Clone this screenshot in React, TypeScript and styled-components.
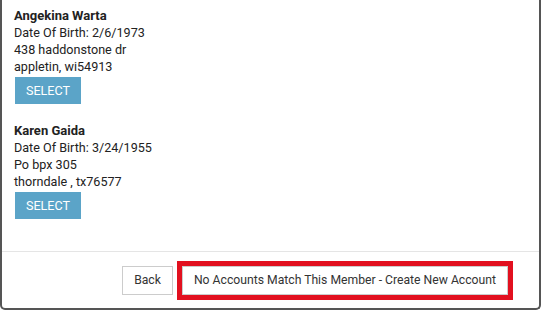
import React from 'react'
import styled, { createGlobalStyle } from 'styled-components'

interface IMember {
  name: string
  dob: string
  street: string
  city: string
}

const members: IMember[] = [
  {
    name: 'Angekina Warta',
    dob: '2/6/1973',
    street: '438 haddonstone dr',
    city: 'appletin, wi54913',
  },
  {
    name: 'Karen Gaida',
    dob: '3/24/1955',
    street: 'Po bpx 305',
    city: 'thorndale , tx76577',
  },
]

const MemberCard = ({ name, dob, street, city }: IMember) => (
  <Member>
    <Name>{name}</Name>
    <Line>Date Of Birth: {dob}</Line>
    <Line>{street}</Line>
    <Line>{city}</Line>
    <SelectButton>SELECT</SelectButton>
  </Member>
)

const App = () => {
  return (
    <>
      <GlobalStyle />
      <Modal>
        <Body>
          {members.map(m => (
            <MemberCard key={m.name} {...m} />
          ))}
        </Body>
        <Footer>
          <DefaultButton>Back</DefaultButton>
          <Highlight>
            <DefaultButton>No Accounts Match This Member - Create New Account</DefaultButton>
          </Highlight>
        </Footer>
      </Modal>
    </>
  )
}

const GlobalStyle = createGlobalStyle`
  html, body {
    margin: 0;
    padding: 0;
    background: #ffffff;
    overflow: hidden;
  }
  body {
    font-family: Roboto, "Liberation Sans", Arial, sans-serif;
    color: #222;
  }
`

const Modal = styled.div`
  box-sizing: border-box;
  width: 541px;
  height: 310px;
  display: flex;
  flex-direction: column;
  background: #fff;
  border: 2px solid #555;
  border-top: none;
  border-radius: 0 0 5px 5px;
`

const Body = styled.div`
  flex: 1;
  padding: 7px 12px 0;
  display: flex;
  flex-direction: column;
  gap: 18px;
`

const Member = styled.div`
  display: flex;
  flex-direction: column;
  align-items: flex-start;
`

const Name = styled.div`
  font-size: 13px;
  line-height: 17px;
  font-weight: bold;
`

const Line = styled.div`
  font-size: 12.6px;
  line-height: 17px;
`

const SelectButton = styled.button`
  margin: 2px 0 0 1px;
  height: 27px;
  width: 66px;
  padding: 0;
  border: none;
  border-radius: 0;
  background: #5ba4c8;
  color: #fff;
  font-family: Roboto, "Liberation Sans", Arial, sans-serif;
  font-size: 12.6px;
`

const Footer = styled.div`
  height: 56px;
  border-top: 1px solid #e5e5e5;
  display: flex;
  align-items: center;
  justify-content: flex-end;
  gap: 4px;
  padding: 0 26px 0 0;
`

const Highlight = styled.div`
  display: flex;
  border: 5px solid #e2101f;
`

const DefaultButton = styled.button`
  box-sizing: border-box;
  height: 29px;
  padding: 0 11px;
  background: #fff;
  border: 1px solid #ccc;
  border-radius: 0;
  color: #333;
  font-family: Roboto, "Liberation Sans", Arial, sans-serif;
  font-size: 12.2px;
`

export default App
